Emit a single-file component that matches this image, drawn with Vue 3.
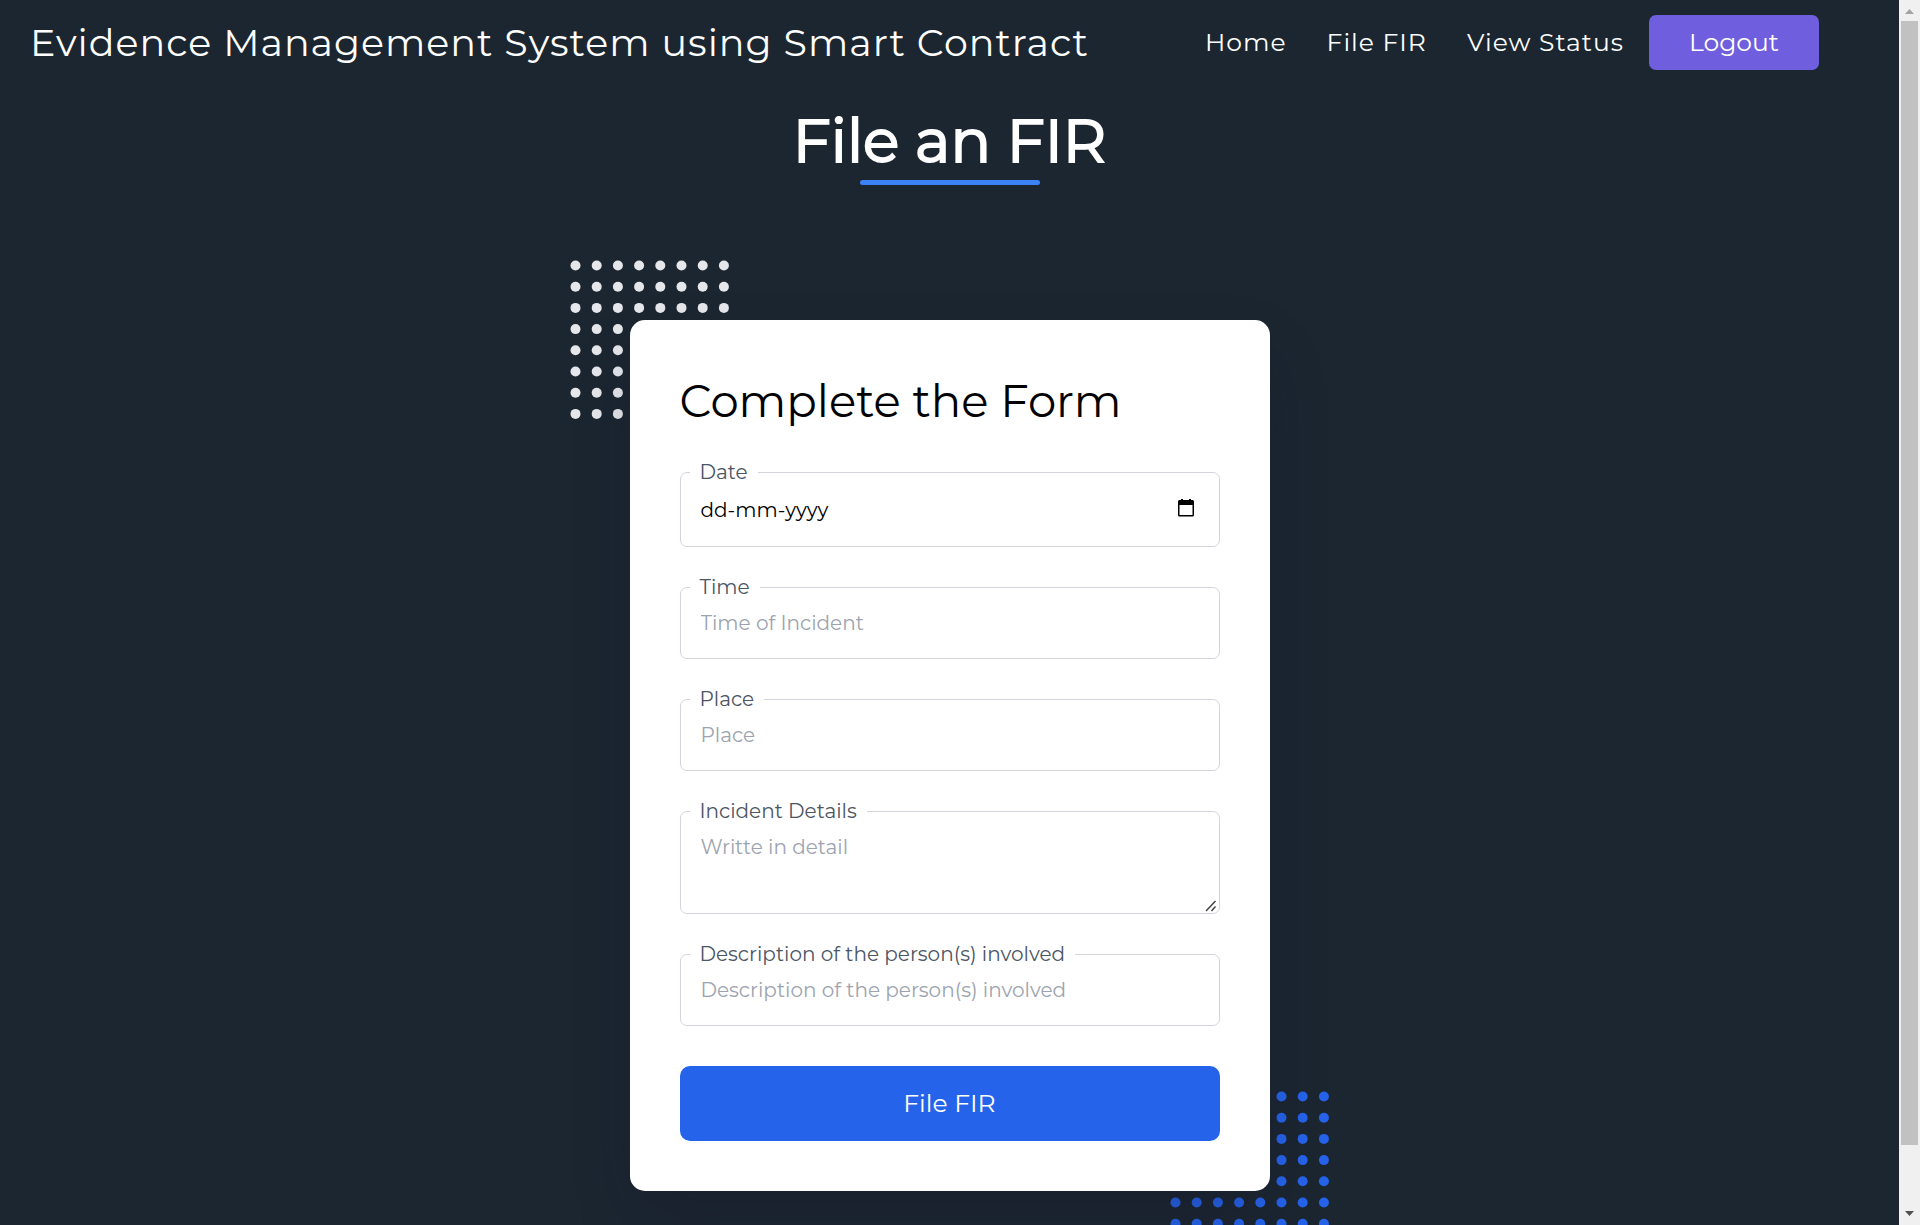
<script setup>
const links = ['Home', 'File FIR', 'View Status']
const fields = [
  { id: 'date', label: 'Date', placeholder: 'dd-mm-yyyy', kind: 'date' },
  { id: 'time', label: 'Time', placeholder: 'Time of Incident', kind: 'text' },
  { id: 'place', label: 'Place', placeholder: 'Place', kind: 'text' },
  { id: 'details', label: 'Incident Details', placeholder: 'Writte in detail', kind: 'area' },
  {
    id: 'description',
    label: 'Description of the person(s) involved',
    placeholder: 'Description of the person(s) involved',
    kind: 'text',
  },
]
const dots = Array.from({ length: 64 }, (_, i) => ({
  x: 5.5 + (i % 8) * 21.2,
  y: 5.5 + Math.floor(i / 8) * 21.2,
}))
</script>

<template>
  <div class="window">
    <div class="page">
      <header class="bar">
        <div class="brand">Evidence Management System using Smart Contract</div>
        <nav class="nav">
          <a v-for="link in links" :key="link" href="#">{{ link }}</a>
          <button type="button" class="logout">Logout</button>
        </nav>
      </header>

      <main class="main">
        <h1>File an FIR</h1>
        <div class="rule"></div>

        <div class="stage">
          <svg class="dots dots-top" viewBox="0 0 160 160" aria-hidden="true">
            <circle v-for="(d, i) in dots" :key="i" :cx="d.x" :cy="d.y" r="5" />
          </svg>
          <svg class="dots dots-bottom" viewBox="0 0 160 160" aria-hidden="true">
            <circle v-for="(d, i) in dots" :key="i" :cx="d.x" :cy="d.y" r="5" />
          </svg>

          <form class="card" @submit.prevent>
            <h2>Complete the Form</h2>
            <div v-for="f in fields" :key="f.id" class="field" :class="f.kind">
              <label :for="f.id">{{ f.label }}</label>
              <textarea v-if="f.kind === 'area'" :id="f.id" :placeholder="f.placeholder"></textarea>
              <input v-else :id="f.id" type="text" :placeholder="f.placeholder" />
              <button v-if="f.kind === 'date'" type="button" class="pick" aria-label="Choose date">
                <svg viewBox="0 0 16 18" width="16" height="18" aria-hidden="true">
                  <path
                    d="M3 0h2v1h6V0h2v1h1.500a1.500 1.500 0 0 1 1.500 1.500v13.500a1.500 1.500 0 0 1-1.500 1.500h-13A1.500 1.500 0 0 1 0 16V2.500A1.500 1.500 0 0 1 1.500 1H3zM1.500 6v10h13V6z"
                  />
                </svg>
              </button>
              <svg v-if="f.kind === 'area'" class="grip" viewBox="0 0 12 12" aria-hidden="true">
                <path d="M1 11L10.500 1M6.500 11l4-4.500" fill="none" stroke="#444" stroke-width="1.500" />
              </svg>
            </div>
            <button type="submit" class="submit">File FIR</button>
          </form>
        </div>
      </main>
    </div>

    <div class="scrollbar" aria-hidden="true">
      <svg viewBox="0 0 21 21"><path d="M6 14l4.500-5 4.500 5z" fill="#a3a3a3" /></svg>
      <div class="track"><div class="thumb"></div></div>
      <svg viewBox="0 0 21 21"><path d="M6 7l4.500 5 4.500-5z" fill="#505050" /></svg>
    </div>
  </div>
</template>

<style>
body {
  margin: 0;
  background: #1b2631;
}
</style>

<style scoped>
.window {
  display: grid;
  grid-template-columns: minmax(0, 1fr) 21px;
  height: 100vh;
  overflow: hidden;
  font-family: Montserrat, Inter, sans-serif;
  font-weight: 400;
}
button,
input,
textarea {
  font: inherit;
}
.page {
  overflow: hidden;
  background: #1b2631;
}
.bar {
  display: flex;
  align-items: center;
  justify-content: space-between;
  padding: 15px 80px 15px 30px;
  color: #fff;
}
.brand {
  font-size: 38px;
  line-height: 52px;
  letter-spacing: 1px;
  white-space: nowrap;
}
.nav {
  display: flex;
  align-items: center;
  font-size: 25px;
}
.nav a {
  margin-right: 40px;
  padding-bottom: 2px;
  color: #fff;
  letter-spacing: 1px;
  text-decoration: none;
  white-space: nowrap;
}
.nav a:last-of-type {
  margin-right: 25px;
}
.logout {
  width: 170px;
  height: 55px;
  padding: 0 0 2px;
  border: 0;
  border-radius: 7px;
  background: #6f5ede;
  color: #fff;
}
.main {
  display: flex;
  flex-direction: column;
  align-items: center;
}
h1 {
  margin: 18px 0 2px;
  color: #fff;
  font-size: 60px;
  font-weight: 400;
  line-height: 75px;
  -webkit-text-stroke: 2px #fff;
}
.rule {
  width: 180px;
  height: 5px;
  border-radius: 3px;
  background: #3b82f6;
}
.stage {
  position: relative;
  isolation: isolate;
  width: 640px;
  margin: 135px 0 60px;
}
.dots {
  position: absolute;
  z-index: -1;
  width: 160px;
  height: 160px;
}
.dots-top {
  top: -60px;
  left: -60px;
  fill: #e5e7eb;
}
.dots-bottom {
  right: -60px;
  bottom: -60px;
  fill: #2563eb;
}
.card {
  display: flex;
  flex-direction: column;
  gap: 40px;
  padding: 50px;
  border-radius: 15px;
  background: #fff;
  box-shadow: 0 30px 60px -15px rgba(24, 20, 40, 0.35);
}
h2 {
  margin: 0;
  color: #000;
  font-size: 45px;
  font-weight: 400;
  line-height: 62px;
}
.field {
  position: relative;
  display: flex;
}
.field label {
  position: absolute;
  top: -12px;
  left: 10px;
  padding: 0 10px;
  background: #fff;
  color: #4b5563;
  font-size: 20px;
  line-height: 25px;
}
.field input,
.field textarea {
  box-sizing: border-box;
  width: 100%;
  height: 72px;
  padding: 14px 20px;
  border: 1px solid #d1d5db;
  border-radius: 7px;
  outline: 0;
  background: #fff;
  color: #000;
  font-size: 20px;
  line-height: 42px;
}
.field textarea {
  display: block;
  height: 103px;
  resize: none;
}
.field ::placeholder {
  color: #9ca3af;
  opacity: 1;
}
.date input {
  height: 75px;
}
.date ::placeholder {
  color: #000;
}
.pick {
  position: absolute;
  top: 27px;
  right: 26px;
  display: flex;
  padding: 0;
  border: 0;
  background: none;
}
.grip {
  position: absolute;
  right: 3px;
  bottom: 2px;
  width: 12px;
  height: 12px;
  pointer-events: none;
}
.submit {
  height: 75px;
  padding: 0 0 2px;
  border: 0;
  border-radius: 10px;
  background: #2563eb;
  color: #fff;
  font-size: 25px;
}
.scrollbar {
  display: flex;
  flex-direction: column;
  background: #f0f0f0;
}
.scrollbar svg {
  width: 21px;
  height: 21px;
}
.track {
  flex: 1;
}
.thumb {
  height: 95%;
  margin: 0 2px;
  background: #c1c1c1;
}
</style>
